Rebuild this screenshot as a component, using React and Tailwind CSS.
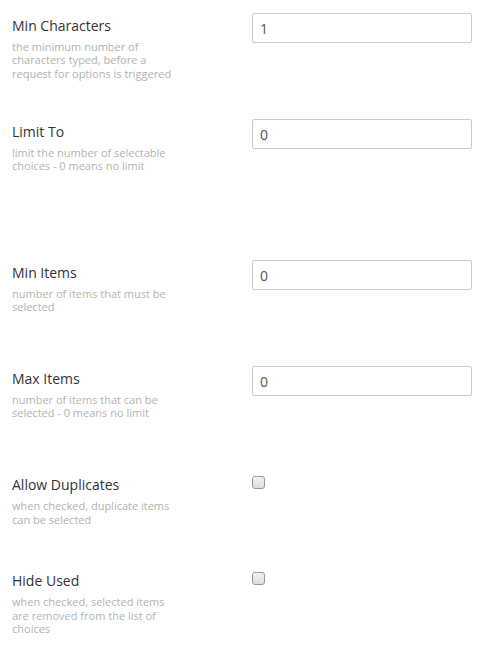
const rows = [
  { label: "Min Characters", desc: "the minimum number of characters typed, before a request for options is triggered", type: "input", value: "1", h: "h-[106px]" },
  { label: "Limit To", desc: "limit the number of selectable choices - 0 means no limit", type: "input", value: "0", h: "h-[141px]" },
  { label: "Min Items", desc: "number of items that must be selected", type: "input", value: "0", h: "h-[106px]" },
  { label: "Max Items", desc: "number of items that can be selected - 0 means no limit", type: "input", value: "0", h: "h-[109px]" },
  { label: "Allow Duplicates", desc: "when checked, duplicate items can be selected", type: "check", h: "h-[96px]" },
  { label: "Hide Used", desc: "when checked, selected items are removed from the list of choices", type: "check", h: "h-[79px]" },
];

function Checkbox() {
  return (
    <div className="mt-[1px] w-[13px] h-[13px] rounded-[3px] border border-[#9a9a9a] bg-gradient-to-b from-[#f4f4f4] to-[#dcdcdc]" />
  );
}

export default function App() {
  return (
    <div className="w-[488px] h-[650px] bg-white pt-[13px] pl-[12px] overflow-hidden" style={{ fontFamily: '"Open Sans", sans-serif' }}>
      {rows.map((r) => (
        <div key={r.label} className={`flex items-start ${r.h}`}>
          <div className={`w-[240px] shrink-0 ${r.type === "input" ? "pt-[2.5px]" : ""}`}>
            <p className="text-[14px] leading-[20px] text-[#333]">{r.label}</p>
            <p className="mt-[4px] w-[166px] text-[11px] leading-[13.5px] text-[#b3b3b3]">{r.desc}</p>
          </div>
          {r.type === "input" ? (
            <input
              readOnly
              value={r.value}
              className="w-[220px] h-[30px] border border-[#ccc] rounded-[2px] px-[7px] text-[14px] text-[#555] outline-none"
            />
          ) : (
            <Checkbox />
          )}
        </div>
      ))}
    </div>
  );
}
